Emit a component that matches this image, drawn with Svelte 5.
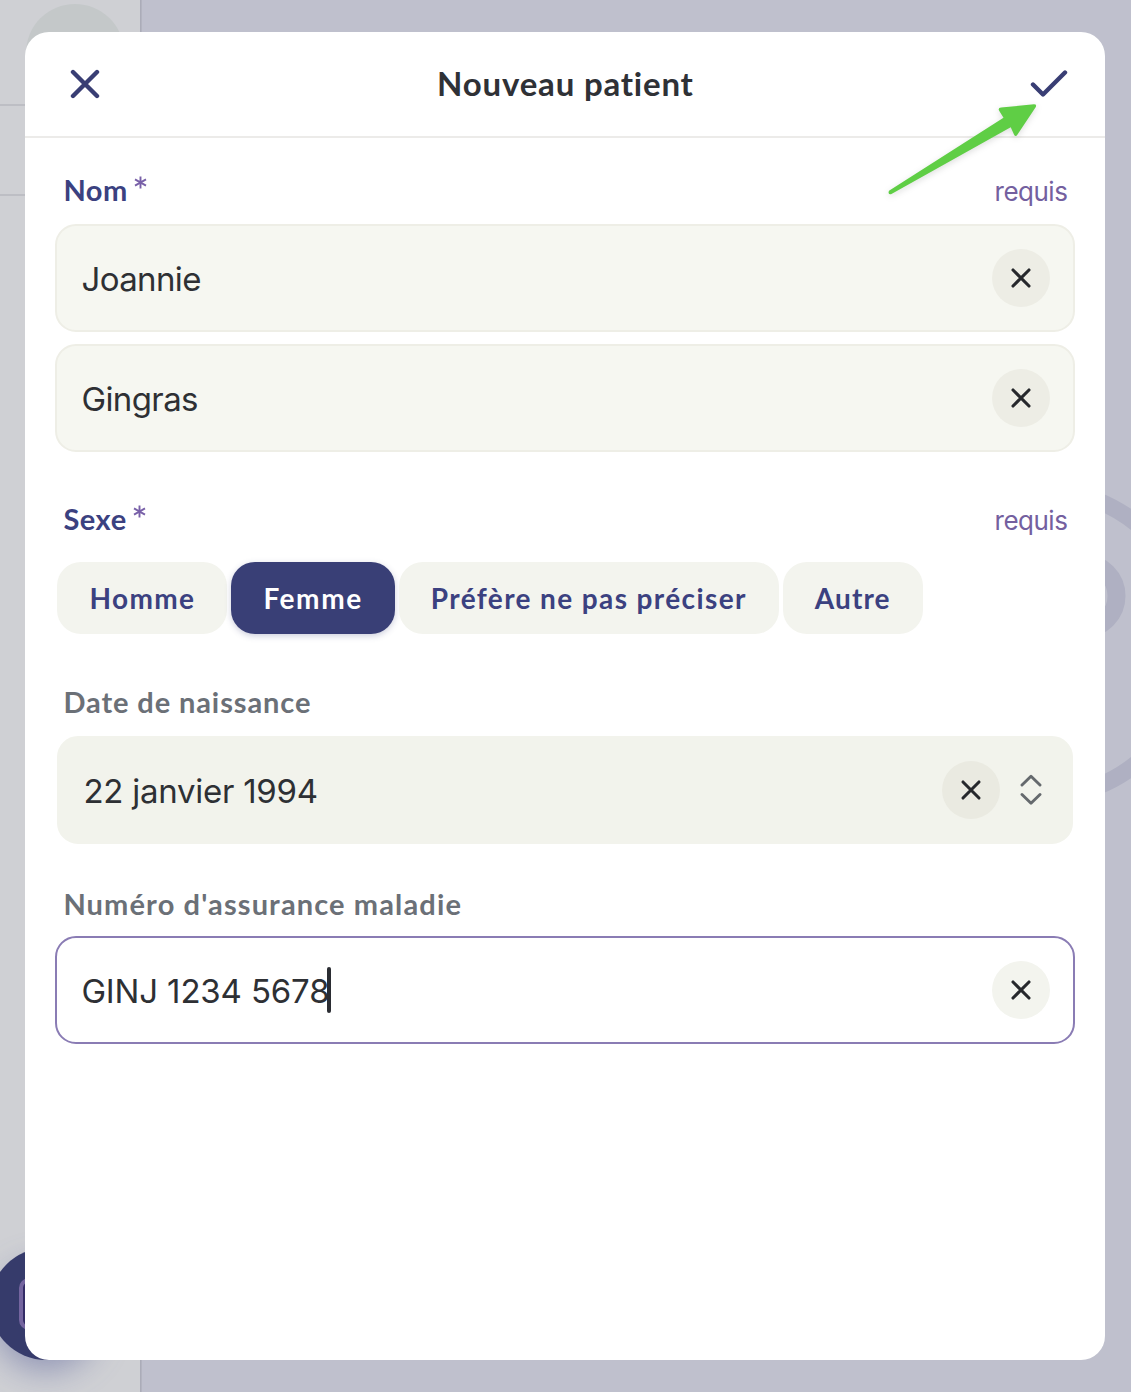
<script>
  const names = ['Joannie', 'Gingras'];
  const options = ['Homme', 'Femme', 'Préfère ne pas préciser', 'Autre'];
  let selected = $state('Femme');
</script>

{#snippet clear()}
  <button class="clear" aria-label="Effacer">
    <svg width="58" height="58" viewBox="0 0 58 58"><path d="M21 21 37 37M37 21 21 37" /></svg>
  </button>
{/snippet}

{#snippet star()}
  <svg class="star" width="13" height="13" viewBox="0 0 13 13"><path d="M6.5 .5v12M1 3.4l11 6.2M12 3.4 1 9.600" /></svg>
{/snippet}

<div class="screen">
  <svg class="backdrop" width="1131" height="1392" viewBox="0 0 1131 1392">
    <defs>
      <filter id="glow" x="-60%" y="-60%" width="220%" height="220%"><feGaussianBlur stdDeviation="17" /></filter>
    </defs>
    <rect width="1131" height="1392" fill="#bfc0cd" />
    <rect width="140" height="1392" fill="#cfd0d4" />
    <rect x="140" width="1.6" height="1392" fill="#abacb8" />
    <circle cx="75" cy="53" r="49" fill="#c4c8c9" />
    <path d="M0 105H30M0 195H30" stroke="#bdbec4" stroke-width="2" />
    <circle cx="1040" cy="643.5" r="154" fill="none" stroke="#afb0c2" stroke-width="17" />
    <circle cx="1083.5" cy="596" r="33" fill="none" stroke="#afb0c2" stroke-width="18" />
    <circle cx="46" cy="1318" r="52" fill="#59609a" opacity="0.55" filter="url(#glow)" />
    <circle cx="46" cy="1304" r="56" fill="#363b6b" />
    <rect x="21" y="1280" width="50" height="48" rx="8" fill="#332c66" stroke="#74659f" stroke-width="4" />
  </svg>

  <main class="modal">
    <header>
      <svg class="close" width="30" height="30" viewBox="0 0 30 30"><path d="M3 3 27 27M27 3 3 27" /></svg>
      <h1>Nouveau patient</h1>
      <svg class="check" width="38" height="28" viewBox="0 0 38 28"><path d="M3 14.500 13 24.500 35 2.500" /></svg>
    </header>

    <div class="body">
      <div class="label-row nom">
        <span class="label">Nom</span>{@render star()}
        <span class="required">requis</span>
      </div>
      <div class="stack">
        {#each names as value}
          <div class="field"><span class="value">{value}</span>{@render clear()}</div>
        {/each}
      </div>

      <div class="label-row sexe">
        <span class="label">Sexe</span>{@render star()}
        <span class="required">requis</span>
      </div>
      <div class="chips">
        {#each options as option}
          <button class="chip" class:active={selected === option} onclick={() => (selected = option)}>{option}</button>
        {/each}
      </div>

      <div class="label-row birth"><span class="label muted">Date de naissance</span></div>
      <div class="field date">
        <span class="value">22 janvier 1994</span>
        {@render clear()}
        <svg class="stepper" width="22" height="32" viewBox="0 0 22 32"><path d="M2 11 11 2.2 20 11M2 20.5 11 29.3 20 20.5" /></svg>
      </div>

      <div class="label-row insurance"><span class="label muted long">Numéro d'assurance maladie</span></div>
      <div class="field focused">
        <span class="value code">GINJ 1234 5678</span><i class="caret"></i>
        {@render clear()}
      </div>
    </div>
  </main>

  <svg class="arrow" width="156" height="100" viewBox="0 0 156 100">
    <path d="M5 90.800 L119.500 17.700 L115 10.500 Q113.800 8 117 7.600 L150 4.300 Q153 4.300 151.800 7 L133.500 34.500 Q131.500 37.500 130 34.500 L126.700 27.300 L7 94.200 Q3.500 94.500 5 90.800Z" />
  </svg>
</div>

<style>
  :global(body) { margin: 0; background: #bfc0cd; }
  .screen {
    position: relative;
    box-sizing: border-box;
    width: 1131px;
    height: 1392px;
    padding: 32px 25.6px 32px 25.4px;
    overflow: hidden;
    font-family: Inter, sans-serif;
  }
  .backdrop { position: absolute; inset: 0; }
  .modal {
    position: relative;
    box-sizing: border-box;
    height: 1328px;
    background: #fff;
    border-radius: 24px;
    overflow: hidden;
  }
  header {
    box-sizing: border-box;
    height: 106px;
    padding: 0 37px 0 45px;
    border-bottom: 2px solid #ecebe9;
    display: grid;
    grid-template-columns: 120px 1fr 128px;
    align-items: center;
  }
  header path { fill: none; stroke: #393e74; stroke-width: 4.4; stroke-linecap: round; stroke-linejoin: round; }
  .check { justify-self: end; }
  h1 {
    margin: 0;
    padding-bottom: 3px;
    font: 700 33px/44px Lato, sans-serif;
    letter-spacing: 0.8px;
    color: #2f3136;
    text-align: center;
  }
  .body { padding: 0 30px; }
  .label-row { display: flex; align-items: center; padding: 0 8px; height: 40px; }
  .label { font: 700 29px/40px Lato, sans-serif; letter-spacing: 0.55px; color: #3b4180; }
  .muted { letter-spacing: 0.9px; color: #6b7077; }
  .long { letter-spacing: 1.13px; }
  .star { margin: 0 0 15px 6px; fill: none; stroke: #7860a8; stroke-width: 1.9; }
  .required { margin-left: auto; padding-top: 4px; font-size: 26px; line-height: 40px; letter-spacing: -0.5px; color: #74609f; }
  .nom { margin-top: 32px; }
  .stack { display: grid; gap: 12px; margin-top: 14px; }
  .field {
    box-sizing: border-box;
    height: 108px;
    padding: 0 23px 0 24px;
    border: 2px solid #eeeee6;
    border-radius: 21px;
    background: #f6f7f1;
    display: flex;
    align-items: center;
  }
  .value { font-size: 33px; line-height: 44px; letter-spacing: -0.6px; color: #2e3034; padding-top: 1px; }
  .date .value { letter-spacing: -0.25px; padding-top: 2px; }
  .value.code { letter-spacing: -0.15px; }
  .clear {
    width: 58px;
    height: 58px;
    margin: 0 0 0 auto;
    padding: 0;
    border: 0;
    border-radius: 50%;
    background: #edede5;
    flex: none;
  }
  .clear svg { display: block; }
  .clear path { fill: none; stroke: #26282c; stroke-width: 3.1; stroke-linecap: round; }
  .sexe { margin-top: 47px; }
  .chips { display: flex; gap: 4px; margin: 23px 0 0 2px; }
  .chip {
    height: 72px;
    padding: 0 32px;
    border: 0;
    border-radius: 24px;
    background: #f3f4ee;
    color: #3b4180;
    font: 700 28px/72px Lato, sans-serif;
    letter-spacing: 1.38px;
  }
  .chip:last-child { letter-spacing: 1.1px; }
  .chip.active { background: #393f76; color: #fff; letter-spacing: 1.6px; box-shadow: 0 2px 6px #393f7640; }
  .birth { margin-top: 48px; }
  .date { margin: 14px 2px 0; background: #f2f3ec; border-color: #f2f3ec; }
  .date .clear { background: #eaeae1; }
  .stepper { margin-left: 20px; margin-right: 6px; fill: none; stroke: #65696d; stroke-width: 2.9; stroke-linecap: round; stroke-linejoin: round; }
  .insurance { margin-top: 40px; }
  .focused { margin-top: 12px; background: #fff; border-color: #8a7cb4; }
  .focused .clear { background: #f3f4ee; }
  .caret { width: 4px; height: 46px; border-radius: 2px; background: #2b2d33; margin-left: -2px; }
  .arrow { position: absolute; left: 884px; top: 100px; fill: #5fce45; filter: drop-shadow(0 2px 3px #0002); }
</style>
